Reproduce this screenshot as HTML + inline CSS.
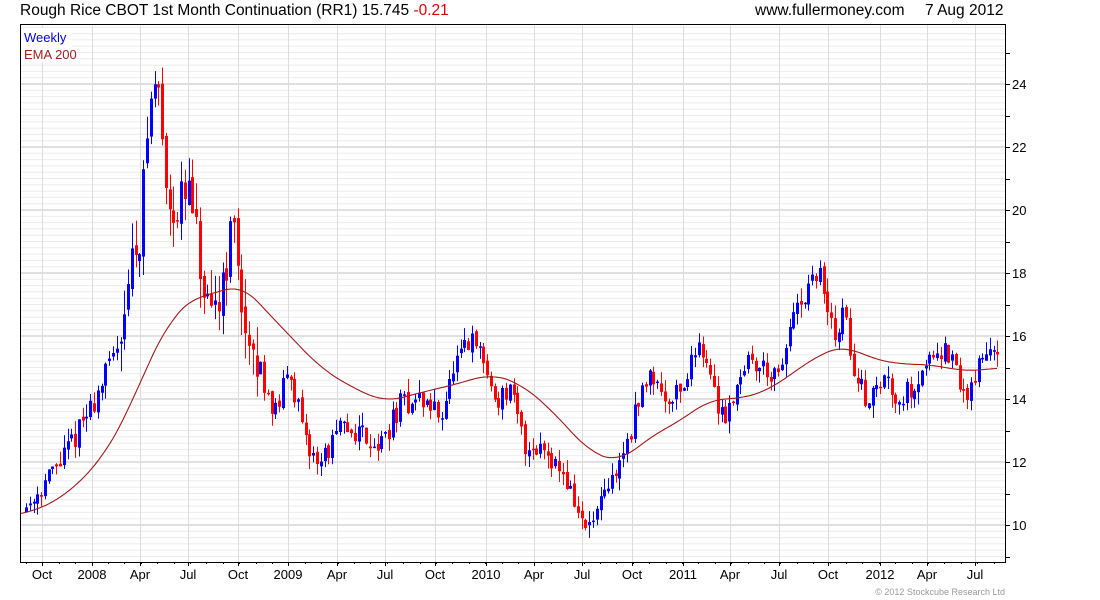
<!DOCTYPE html>
<html><head><meta charset="utf-8">
<style>
html,body{margin:0;padding:0;background:#fff;width:1100px;height:600px;overflow:hidden}
svg{display:block;font-family:"Liberation Sans",Arial,sans-serif}
</style></head>
<body>
<svg id="c" width="1100" height="600" xmlns="http://www.w3.org/2000/svg">
<text x="20" y="15" font-size="15.5" fill="#000">Rough Rice CBOT 1st Month Continuation (RR1) 15.745 <tspan fill="#e00000">-0.21</tspan></text>
<text x="755" y="15" font-size="15.5" fill="#000">www.fullermoney.com</text>
<text x="925" y="15" font-size="15.5" fill="#000">7 Aug 2012</text>
<g id="grid"></g>
<g id="cand"></g>
<path id="ema" fill="none" stroke="#a01818" stroke-width="1.1"/>
<rect x="20.5" y="24.5" width="985" height="538" fill="none" stroke="#000" stroke-width="1"/>
<rect x="22" y="28" width="50" height="34" fill="#fff"/>
<text x="24" y="42" font-size="13" fill="#0000e0">Weekly</text>
<text x="24" y="59" font-size="13" fill="#a02020">EMA 200</text>
<text x="1005" y="595" font-size="9" fill="#999" text-anchor="end">© 2012 Stockcube Research Ltd</text>
</svg>
<script>
var NS="http://www.w3.org/2000/svg";
function el(p,t,a,txt){var e=document.createElementNS(NS,t);for(var k in a)e.setAttribute(k,a[k]);if(txt!=null)e.textContent=txt;p.appendChild(e);return e;}
var L=20,R=1005,T=24,B=562;
function Y(v){return 525-(v-10)*31.5;}
var g=document.getElementById('grid');
for(var i=0;;i++){var v=9+i*0.2; var y=Y(v); if(y<T)break; if(y>B)continue;
 var isInt=Math.abs(v-Math.round(v))<0.01;
 var major=isInt && Math.round(v)%2==0;
 el(g,'line',{x1:L,x2:R,y1:y,y2:y,stroke:major?'#c0c0c0':'#ebebeb','stroke-width':1});
 if(Math.abs(v*2-Math.round(v*2))<0.01) el(g,'line',{x1:R,x2:R+(isInt?5:3),y1:Math.round(y)+0.5,y2:Math.round(y)+0.5,stroke:'#000'});
 if(major) el(g,'text',{x:R+7,y:y+5,'font-size':13,fill:'#000'},String(Math.round(v)));
}
var months=[[42,'Oct'],[92,'2008'],[140,'Apr'],[188,'Jul'],[238,'Oct'],[288,'2009'],[337,'Apr'],[385,'Jul'],[435,'Oct'],[486,'2010'],[534,'Apr'],[582,'Jul'],[632,'Oct'],[683,'2011'],[730,'Apr'],[779,'Jul'],[828,'Oct'],[880,'2012'],[927,'Apr'],[975,'Jul']];
months.forEach(function(m){var x=m[0]+0.5;
 el(g,'line',{x1:x,x2:x,y1:T,y2:B,stroke:'#dcdcdc'});
 el(g,'line',{x1:x,x2:x,y1:B,y2:B+4,stroke:'#000'});
 el(g,'text',{x:m[0],y:579,'font-size':13,fill:'#000','text-anchor':'middle'},m[1]);
});
for(var x=26;x<R;x+=16.4){el(g,'line',{x1:Math.round(x)+0.5,x2:Math.round(x)+0.5,y1:B,y2:B+2,stroke:'#000'});}
function interp(pts,x){if(x<=pts[0][0])return pts[0][1];for(var i=1;i<pts.length;i++){if(x<=pts[i][0]){var a=pts[i-1],b=pts[i];var t=(x-a[0])/(b[0]-a[0]);return a[1]+(b[1]-a[1])*t;}}return pts[pts.length-1][1];}
var P=[[26,10.6],[60,12],[92,13.8],[115,15.5],[130,18],[140,19.5],[150,23.5],[158,24],[165,21],[175,20],[190,20.5],[200,18],[210,16],[220,17.5],[232,19.5],[240,18],[248,15],[260,15],[275,13.5],[290,15],[305,12.5],[320,12],[340,13],[360,13],[380,12.5],[400,13.8],[420,14],[440,13.5],[455,15],[470,15.8],[480,15.5],[495,14],[510,14.2],[525,12.5],[545,12.5],[565,11.5],[585,9.8],[600,10.5],[620,12],[635,13.5],[650,15],[665,14],[685,14.5],[700,16],[715,14],[725,13.5],[745,15.2],[765,15],[780,14.5],[790,16.5],[805,17],[818,18.2],[825,17],[835,16],[845,16.8],[855,14.5],[870,14],[885,14.7],[900,14],[915,14.5],[935,15.7],[950,15.3],[965,14],[975,14.8],[990,15.7],[998,15.75]];
var E=[[20,10.3],[60,10.8],[100,12],[130,13.7],[150,15.3],[170,16.5],[195,17.3],[215,17.3],[240,17.7],[260,17],[290,16],[320,15],[350,14.4],[385,13.9],[420,14.2],[460,14.5],[490,14.8],[520,14.5],[550,13.7],[590,12.3],[620,12],[650,12.8],[680,13.3],[710,14],[740,14],[770,14.3],[800,15],[825,15.5],[845,15.7],[870,15.3],[900,15.1],[930,15.1],[960,14.9],[980,14.9],[998,15.0]];
var seed=11;function rnd(){seed=(seed*16807)%2147483647;return seed/2147483647;}
var c=document.getElementById('cand');var prev=10.5;
for(var x=26;x<=998.5;x+=3.78){
 var base=interp(P,x);var vol=(x>120&&x<260)?1.3:0.6;
 var open=prev+(rnd()-0.5)*vol*0.3;
 var close=base+(rnd()-0.5)*vol*1.3;
 var hi=Math.max(open,close)+rnd()*vol*0.7;var lo=Math.min(open,close)-rnd()*vol*0.7;
 var up=close>=open;var col=up?'#0000ff':'#ff0000';var xi=Math.round(x);
 el(c,'line',{x1:xi+0.5,x2:xi+0.5,y1:Y(hi),y2:Y(lo),stroke:col,'stroke-width':1});
 var y1=Y(Math.max(open,close)),y2=Y(Math.min(open,close));
 el(c,'rect',{x:xi-1,y:y1,width:3,height:Math.max(1.5,y2-y1),fill:col});
 prev=close;
}
function sm(x){var s=0,n=0;for(var k=-18;k<=18;k+=2){s+=interp(E,Math.min(998,Math.max(20,x+k)));n++;}return s/n;}
var d='';for(var x=21;x<=998;x+=2){d+=(d?'L':'M')+x+','+Y(sm(x)).toFixed(1);}
document.getElementById('ema').setAttribute('d',d);
</script>
</body></html>
